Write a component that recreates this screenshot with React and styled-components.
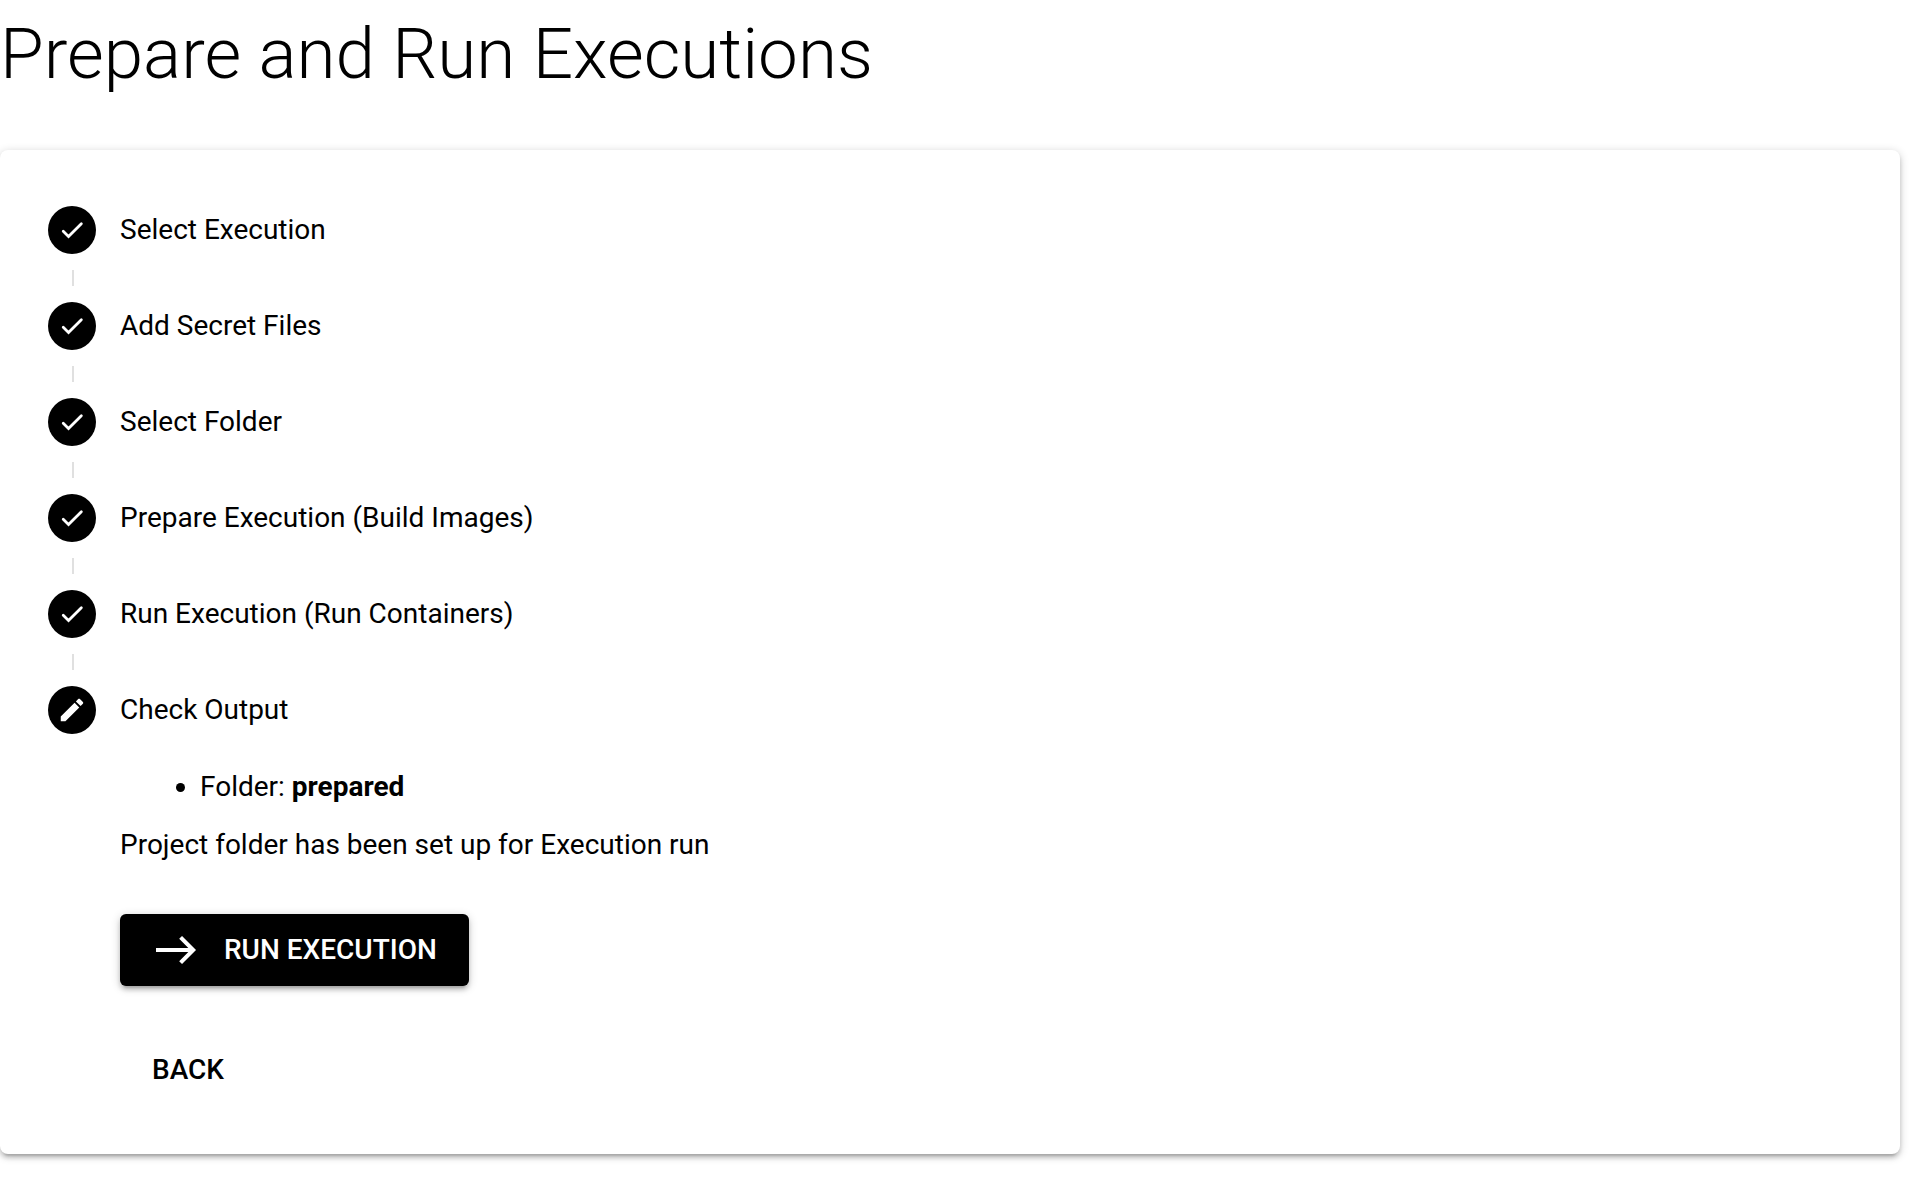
import React from 'react';
import styled, { createGlobalStyle } from 'styled-components';

const GlobalStyle = createGlobalStyle`
  *, *::before, *::after { box-sizing: border-box; }
  body {
    margin: 0;
    background: #fff;
    color: #000;
    font-family: Roboto, sans-serif;
    font-size: 28px;
    line-height: 42px;
  }
`;

const Page = styled.main`
  min-height: 100vh;
  padding: 0 26px 24px 0;
`;

const Title = styled.h1`
  margin: 0 0 42px;
  padding-top: 6px;
  font-size: 71px;
  font-weight: 300;
  line-height: 96px;
  padding-bottom: 6px;
`;

const Card = styled.section`
  padding: 32px 48px 48px;
  border-radius: 8px;
  background: #fff;
  box-shadow:
    0 2px 10px rgba(0, 0, 0, 0.2),
    0 4px 4px rgba(0, 0, 0, 0.14),
    0 6px 2px -4px rgba(0, 0, 0, 0.12);
`;

const Steps = styled.ol`
  margin: 0;
  padding: 0;
  list-style: none;
`;

const Step = styled.li`
  display: grid;
  grid-template-columns: 48px 1fr;
  column-gap: 24px;
`;

const Marker = styled.div`
  display: flex;
  flex-direction: column;
  align-items: center;
  gap: 16px;
  padding-top: 24px;
`;

const Dot = styled.span`
  display: flex;
  align-items: center;
  justify-content: center;
  width: 48px;
  height: 48px;
  border-radius: 50%;
  background: #000;
  color: #fff;
`;

const Connector = styled.span`
  width: 2px;
  height: 16px;
  margin: 0 0 -8px 2px;
  background: #e0e0e0;
`;

const StepLabel = styled.h2`
  margin: 0;
  font-size: 28px;
  font-weight: 400;
  line-height: 96px;
`;

const StepBody = styled.div`
  grid-column: 2;
  display: flex;
  flex-direction: column;
  align-items: flex-start;
`;

const Details = styled.ul`
  margin: 8px 0 16px;
  padding-left: 80px;
  list-style: disc;
`;

const Note = styled.p`
  margin: 0;
`;

const Button = styled.button`
  display: inline-flex;
  align-items: center;
  gap: 24px;
  height: 72px;
  margin-top: 48px;
  padding: 0 32px;
  border: 0;
  border-radius: 6px;
  font: 500 28px/48px Roboto, sans-serif;
  text-transform: uppercase;
  cursor: pointer;
  color: ${(p) => (p.$solid ? '#fff' : '#000')};
  background: ${(p) => (p.$solid ? '#000' : 'transparent')};
  box-shadow: ${(p) =>
    p.$solid
      ? '0 2px 10px rgba(0,0,0,.2), 0 4px 4px rgba(0,0,0,.14), 0 6px 2px -4px rgba(0,0,0,.12)'
      : 'none'};
`;

const CheckIcon = () => (
  <svg width="28" height="28" viewBox="0 0 24 24" fill="none" stroke="currentColor" strokeWidth="2.4" strokeLinecap="round" aria-hidden="true">
    <path d="M4.5 13.1L9 17.5L20 6.6" />
  </svg>
);

const EditIcon = () => (
  <svg width="30" height="30" viewBox="0 0 24 24" fill="currentColor" aria-hidden="true">
    <path d="M3 17.25V21h3.75L17.81 9.94l-3.75-3.75L3 17.25zM20.71 7.04c.39-.39.39-1.02 0-1.41l-2.34-2.34c-.39-.39-1.02-.39-1.41 0l-1.83 1.83 3.75 3.75 1.83-1.83z" />
  </svg>
);

const ArrowIcon = () => (
  <svg width="48" height="48" viewBox="0 0 48 48" fill="none" stroke="currentColor" strokeWidth="4" aria-hidden="true">
    <path d="M4 24H41M28.6 11.4L41.2 24L28.6 36.6" />
  </svg>
);

const doneSteps = [
  'Select Execution',
  'Add Secret Files',
  'Select Folder',
  'Prepare Execution (Build Images)',
  'Run Execution (Run Containers)',
];

export default function App() {
  return (
    <>
      <GlobalStyle />
      <Page>
        <Title>Prepare and Run Executions</Title>
        <Card>
          <Steps>
            {doneSteps.map((label) => (
              <Step key={label}>
                <Marker>
                  <Dot><CheckIcon /></Dot>
                  <Connector />
                </Marker>
                <StepLabel>{label}</StepLabel>
              </Step>
            ))}
            <Step aria-current="step">
              <Marker>
                <Dot><EditIcon /></Dot>
              </Marker>
              <StepLabel>Check Output</StepLabel>
              <StepBody>
                <Details>
                  <li>Folder: <strong>prepared</strong></li>
                </Details>
                <Note>Project folder has been set up for Execution run</Note>
                <Button type="button" $solid>
                  <ArrowIcon />
                  Run Execution
                </Button>
                <Button type="button">Back</Button>
              </StepBody>
            </Step>
          </Steps>
        </Card>
      </Page>
    </>
  );
}
